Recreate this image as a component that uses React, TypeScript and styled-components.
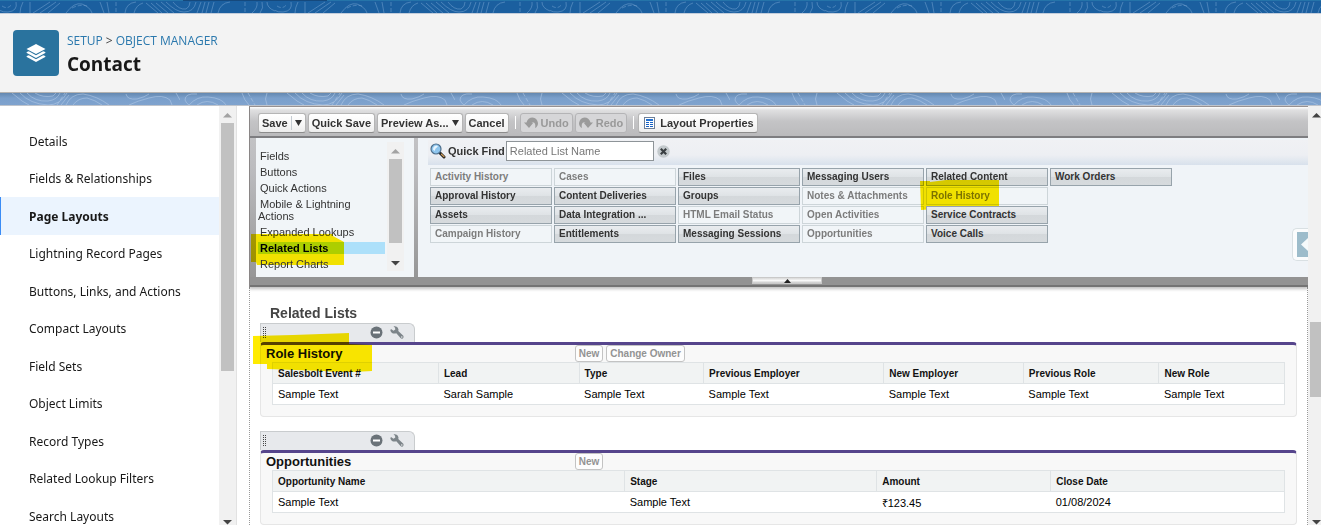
import React from "react";
import styled, { createGlobalStyle, css } from "styled-components";

const GlobalStyle = createGlobalStyle`
  *, *::before, *::after { box-sizing: border-box; }
  html, body { margin: 0; padding: 0; }
  body { background: #fff; overflow: hidden; color: #222; font-family: "Liberation Sans", Arial, sans-serif; }
  button, input { font: inherit; margin: 0; }
`;

/* ---------- page frame ---------- */

const Page = styled.div`
  display: flex;
  flex-direction: column;
  height: 100vh;
`;

const Band = styled.div<{ $light?: boolean }>`
  flex: none;
  height: ${(p) => (p.$light ? 13 : 14)}px;
  border-bottom: 1px solid ${(p) => (p.$light ? "#bfc4cc" : "#c3cddb")};
  background: ${(p) =>
    p.$light ? "linear-gradient(#6488b0, #7a9fcb 5px, #7fa3ce)" : "#1b5f9f"};
  svg { display: block; width: 100%; height: 100%; }
`;

const BrandHeader = styled.header`
  flex: none;
  display: flex;
  align-items: center;
  gap: 8px;
  height: 79px;
  padding: 0 13px;
  background: #f3f3f3;
  border-bottom: 1px solid #b4b2b0;
`;

const BrandIcon = styled.div`
  display: grid;
  place-items: center;
  width: 46px;
  height: 46px;
  border-radius: 4px;
  background: #2a739e;
`;

const BrandText = styled.div`
  padding-top: 2px;
  font-family: "Open Sans", "Noto Sans", sans-serif;
`;

const uiFont = css`font-family: "Noto Sans", "Open Sans", sans-serif;`;

const Crumbs = styled.nav`
  display: flex;
  gap: 3px;
  font-size: 12px;
  line-height: 20px;
  color: #444;
  a { color: #2a78ad; text-decoration: none; }
`;

const Title = styled.h1`
  margin: 0;
  font-size: 19px;
  line-height: 26px;
  font-weight: 700;
  color: #181818;
`;

const Body = styled.div`
  flex: 1;
  min-height: 0;
  display: flex;
  overflow: hidden;
`;

/* ---------- sidebar ---------- */

const Sidebar = styled.aside`
  flex: none;
  display: flex;
  width: 237px;
  border-right: 1px solid #e2e2e2;
`;

const SideList = styled.ul`
  flex: 1;
  margin: 0;
  padding: 16px 0 0;
  list-style: none;
  overflow: hidden;
`;

const SideItem = styled.li<{ $active?: boolean }>`
  ${uiFont}
  height: 37px;
  &:nth-child(odd) { height: 38px; }
  background: ${(p) => (p.$active ? "#ebf4fe" : "transparent")};
  box-shadow: ${(p) => (p.$active ? "inset 1px 0 #3b8cf5" : "none")};
  a {
    display: flex;
    align-items: center;
    height: 100%;
    padding-left: 29px;
    font-size: 12px;
    font-weight: ${(p) => (p.$active ? 700 : 400)};
    color: #181818;
    text-decoration: none;
  }
`;

/* ---------- scrollbars ---------- */

const Track = styled.div<{ $width: number }>`
  flex: none;
  display: flex;
  flex-direction: column;
  justify-content: space-between;
  width: ${(p) => p.$width}px;
  overflow: hidden;
  background: #f1f1f1;
  svg { flex: none; display: block; }
`;

const Thumb = styled.div<{ $offset: number; $size: number }>`
  flex: none;
  width: 13px;
  height: ${(p) => p.$size}px;
  margin: ${(p) => p.$offset}px 2px auto;
  background: #c1c1c1;
`;

function Scrollbar(props: { width: number; offset: number; size: number; up: string; foot: number }) {
  return (
    <Track $width={props.width} aria-hidden="true">
      <svg width="17" height="17"><path d="M4 11.5L8.5 7l4.500 4.500z" fill={props.up} /></svg>
      <Thumb $offset={props.offset} $size={props.size} />
      <svg width="17" height={props.foot}><path d="M4 7l4.500 4.500L13 7z" fill="#444" /></svg>
    </Track>
  );
}

/* ---------- layout editor ---------- */

const Editor = styled.main`
  flex: 1;
  min-width: 0;
  margin-left: 12px;
  display: flex;
  flex-direction: column;
  overflow: hidden;
`;

const Palette = styled.section`
  position: relative;
  flex: none;
  border-left: 1px solid #8a8686;
  border-top: 1px solid #979191;
  background: linear-gradient(#e9e9ea, #c6c6c8 12px, #bcbcbf 60px, #939393);
  box-shadow: 0 2px 3px rgba(0, 0, 0, 0.25);
`;

const Toolbar = styled.div`
  display: flex;
  align-items: center;
  gap: 2px;
  height: 31px;
  padding: 2px 8px 0 8px;
  background: linear-gradient(#fff, #e0e0e1 3px, #c4c4c6 14px, #bababc);
  border-bottom: 2px solid #7d7d80;
`;

const Tool = styled.button`
  display: flex;
  align-items: center;
  gap: 3px;
  height: 20px;
  padding: 0 3px;
  border: 1px solid #b5b5b5;
  border-bottom-color: #8c8c8c;
  border-radius: 3px;
  background: linear-gradient(#fff, #f7f7f7 60%, #ececec);
  font-size: 11px;
  line-height: 14px;
  font-weight: 700;
  color: #333;
  white-space: nowrap;
  &:disabled { color: #999; background: #d6d6d8; border-color: #b4b4b6; }
`;

const SplitLine = styled.span`
  width: 1px;
  height: 14px;
  background: #c5ccd2;
`;

const Divider = styled.span`
  width: 1px;
  height: 13px;
  margin: 0 2px 0 4px;
  background: #fff;
`;

const PaletteBody = styled.div`
  display: flex;
  height: 139px;
  margin-left: 6px;
`;

const Categories = styled.div`
  flex: none;
  display: flex;
  width: 158px;
  padding: 4px 10px 6px 2px;
  background: #f1f5f8;
`;

const CategoryList = styled.ul`
  flex: 1;
  margin: 8px 2px 0 0;
  padding: 0;
  list-style: none;
  font-size: 11px;
  line-height: 12px;
`;

const Category = styled.li<{ $active?: boolean }>`
  position: relative;
  margin-bottom: 4px;
  background: ${(p) => (p.$active ? "#ade0fa" : "transparent")};
  font-weight: ${(p) => (p.$active ? 700 : 400)};
  a { padding-left: 2px; color: ${(p) => (p.$active ? "#000" : "#333")}; text-decoration: none; }
`;

const Available = styled.div`
  flex: 1;
  min-width: 0;
  margin-left: 4px;
  padding: 2px 0 0 10px;
  background: #f0f4f8;
`;

const QuickFind = styled.form`
  display: flex;
  align-items: center;
  height: 25px;
  padding: 0 2px 3px;
  background: linear-gradient(#f0f1f4, #edeff3 60%, #d8e1ec);
  label {
    display: flex;
    align-items: center;
    gap: 2px;
    padding-bottom: 1px;
    font-size: 11px;
    font-weight: 700;
    color: #333;
  }
`;

const FindBox = styled.input`
  width: 148px;
  height: 20px;
  margin: 0 3px 0 1px;
  padding: 0 3px;
  border: 1px solid #8e9498;
  background: #fff;
  font-size: 11px;
  &::placeholder { color: #777; opacity: 1; }
`;

const ClearButton = styled.button`
  display: grid;
  width: 13px;
  height: 13px;
  padding: 0;
  border: 0;
  background: none;
`;

const ItemGrid = styled.div`
  display: grid;
  grid-auto-flow: column;
  grid-template-rows: repeat(4, 18px);
  grid-auto-columns: 122px;
  gap: 1px 2px;
  padding: 3px 2px;
`;

const Item = styled.div<{ $used?: boolean }>`
  position: relative;
  padding: 1px 4px;
  border: 1px solid ${(p) => (p.$used ? "#cdd5d9" : "#97a3ab")};
  background: ${(p) =>
    p.$used ? "#f1f5f8" : "linear-gradient(#e9ecef, #dfe3e6 48%, #d4d8db 52%, #d6dadd)"};
  font-size: 10px;
  line-height: 13px;
  font-weight: 700;
  color: ${(p) => (p.$used ? "#7c7c7c" : "#333")};
  white-space: nowrap;
`;

const PaletteFoot = styled.div`
  display: flex;
  justify-content: center;
  height: 10px;
  background: #939393;
  border-bottom: 2px solid #747474;
`;

const Collapse = styled.button`
  display: grid;
  place-items: center;
  width: 70px;
  height: 7px;
  margin-left: 16px;
  padding: 0;
  border: 1px solid #c9c9c9;
  background: linear-gradient(#d8d8d8, #f8f8f8 50%, #c8c8c8);
`;

const HelpTab = styled.button`
  position: absolute;
  right: 0;
  top: 121px;
  width: 16px;
  height: 33px;
  padding: 3px 0 4px 4px;
  border: 1px solid #d9e0e3;
  border-right: 0;
  border-radius: 5px 0 0 5px;
  background: #fbfcfd;
  svg { display: block; }
`;

const Canvas = styled.section`
  flex: 1;
  min-height: 0;
  overflow: hidden;
  padding: 17px 10px 0;
  border: dotted #999;
  border-width: 0 1px;
`;

const CanvasTitle = styled.h2`
  margin: 0 0 1px 10px;
  font-size: 14px;
  line-height: 18px;
  font-weight: 700;
  color: #444;
`;

const RelatedBlock = styled.article`
  margin-bottom: 14px;
`;

const Handle = styled.div`
  display: flex;
  align-items: center;
  width: 155px;
  height: 19px;
  padding: 0 0 1px 2px;
  border: 1px solid #c9ccce;
  border-bottom: 0;
  border-radius: 0 6px 0 0;
  background: #e7e9ec;
  button { display: grid; padding: 0; border: 0; background: none; }
`;

const HandleActions = styled.div`
  display: flex;
  gap: 7px;
  margin: 0 10px 0 auto;
`;

const Card = styled.div`
  position: relative;
  padding: 0 11px 11px;
  border: 1px solid #e6e6e6;
  border-top: 3px solid #56458c;
  border-radius: 4px;
  background: #f8f8f8;
`;

const CardHead = styled.div`
  display: flex;
  align-items: center;
  height: 17px;
  margin-left: -6px;
  gap: 3px;
  h3 { flex: 0 0 30%; margin: 0; font-size: 13px; line-height: 16px; color: #111; }
`;

const MiniButton = styled.button`
  height: 17px;
  padding: 0 3px;
  border: 1px solid #c3c3c3;
  border-radius: 3px;
  background: #fdfdfd;
  font-size: 10px;
  line-height: 13px;
  font-weight: 700;
  color: #939393;
`;

const Table = styled.table`
  width: 100%;
  table-layout: fixed;
  border-collapse: collapse;
  border: 1px solid #dfe3e5;
  background: #fff;
  text-align: left;
  color: #000;
  tr { height: 21px; }
  td { padding: 0 5px; font-size: 11px; }
`;

const Th = styled.th<{ $share: number }>`
  width: ${(p) => p.$share}%;
  padding: 0 5px;
  border: 1px solid #dfe3e5;
  background: #f1f3f3;
  font-size: 10px;
  color: #111;
`;

const Marker = styled.svg<{ $x: number; $y: number }>`
  position: absolute;
  left: ${(p) => p.$x}px;
  top: ${(p) => p.$y}px;
  mix-blend-mode: multiply;
  pointer-events: none;
`;

/* ---------- drawings ---------- */

function DarkContours() {
  return (
    <svg aria-hidden="true">
      <defs>
        <pattern id="dark" width="275" height="14" patternUnits="userSpaceOnUse">
          <g fill="none" stroke="#6f9fce" strokeOpacity=".55" strokeWidth="1">
            <path d="M-8 2Q-2 13 8 12Q18 11 16 2M23 2Q20 8 20 13M30 2V13M33 13L50 2M40 13L56 2M48 13L60 3M66 13Q74 2 82 4Q90 7 92 13M100 2L104 13M107 2L109 13M125 13Q126 3 136 2M134 13Q136 5 143 3M146 3L158 13M151 3L162 13M156 3L168 13M161 2L174 13M166 2Q176 12 184 12Q194 12 196 2M173 2Q179 10 186 9Q190 7 190 2M201 2L197 13M205 2L202 13M209 2L206 13M214 2L211 13M218 13Q220 3 230 2M252 13Q258 8 257 2M260 13Q264 8 262 2M267 2Q267 8 275 11" />
            <path strokeDasharray="4 2" d="M2 6Q8 10 12 4M72 8Q80 4 87 6M116 2V13M245 2V13M277 6Q283 10 287 4" />
          </g>
        </pattern>
      </defs>
      <rect width="100%" height="100%" fill="url(#dark)" />
      <rect width="100%" height="1" fill="#2574a9" />
      <rect x="183" width="144" height="1" fill="#16497c" />
    </svg>
  );
}

function LightContours() {
  return (
    <svg aria-hidden="true">
      <defs>
        <pattern id="light" x="180" width="275" height="13" patternUnits="userSpaceOnUse">
          <g fill="none" stroke="#b3cae6" strokeOpacity=".55" strokeWidth="1">
            <path d="M17 1Q5 0 5 7Q6 10 9 12M9 12Q17 3 28 4Q42 5 46 12M17 12Q27 5 38 12M62 0Q64 7 69 12M87 0Q84 6 87 12M115 0Q125 11 143 12Q155 12 162 0M122 0Q130 9 143 8Q152 7 155 0M130 0Q138 5 148 3L151 0M156 12L164 2M161 12Q166 1 178 1Q192 3 204 12M168 12Q173 5 182 5Q190 7 197 12M221 1Q222 7 232 6Q240 4 244 1M224 12Q232 8 244 5Q258 1 265 7L267 12M271 0Q274 8 281 12M107 0L117 8L124 12" />
            <path strokeDasharray="4 2" d="M68 0L75 12M152 12L160 0" />
          </g>
        </pattern>
      </defs>
      <rect width="100%" height="100%" fill="url(#light)" />
    </svg>
  );
}

const LayersIcon = () => (
  <svg width="20" height="20" viewBox="0 0 20 20" fill="#fff" aria-hidden="true">
    <path d="M10 1L19.500 6L10 11L.5 6z" />
    <path d="M.8 9L2.800 8.200L10 12.200L17.200 8.200L19.200 9Q19.700 9.500 19.200 10L10 15L.8 10Q.3 9.500 .8 9z" />
    <path d="M.8 13L2.800 12.200L10 16.200L17.200 12.200L19.200 13Q19.700 13.500 19.200 14L10 19L.8 14Q.3 13.500 .8 13z" />
  </svg>
);

const DownArrow = () => (
  <svg width="7" height="6" aria-hidden="true"><path d="M0 0H7L3.500 6z" fill="#333" /></svg>
);

const CurveArrow = ({ flip }: { flip?: boolean }) => (
  <svg width="14" height="12" viewBox="0 0 14 12" fill="#9b9b9b" aria-hidden="true">
    <path
      transform={flip ? "translate(14 0) scale(-1 1)" : undefined}
      d="M0 5.500H2.500Q4 .5 8.500 .5Q13 .8 14 6Q14 9.500 11 11Q12 7 10 5.500Q8.500 4.300 7.500 5.500H9.500L5 11z"
    />
  </svg>
);

const PropertiesIcon = () => (
  <svg width="15" height="12" viewBox="-2 0 15 12" aria-hidden="true">
    <rect x=".5" y=".5" width="10" height="11" fill="#fff" stroke="#6d7f99" />
    <rect x="2" y="2" width="7" height="2" fill="#1f6fd0" />
    <path d="M2 5.500H5M6 5.500H9M2 7.500H5M6 7.500H9M2 9.500H5M6 9.500H9" stroke="#1761c4" />
  </svg>
);

const Magnifier = () => (
  <svg width="16" height="16" viewBox="0 0 16 16" aria-hidden="true">
    <path d="M10 10L14 14" stroke="#222" strokeWidth="3" strokeLinecap="round" />
    <path d="M11.500 11.200L14 13.600" stroke="#d8a45c" strokeWidth="1.200" strokeLinecap="round" />
    <circle cx="6" cy="6" r="5" fill="#8fc6ee" stroke="#4f6f8c" strokeWidth="1.200" />
    <path d="M3 6.500Q3 3 6.500 2.500L8 3.500Q5 5 4.500 8z" fill="#e8f5fe" />
  </svg>
);

const ClearIcon = () => (
  <svg width="13" height="13" aria-hidden="true">
    <circle cx="6.500" cy="6.500" r="6.200" fill="#c3c9cc" />
    <path d="M3.800 3.800L9.200 9.200M9.200 3.800L3.800 9.200" stroke="#3a3f42" strokeWidth="2.200" />
  </svg>
);

const Grip = () => (
  <svg width="4" height="11" aria-hidden="true">
    <path d="M.5 0V11M2.500 0V11" stroke="#444" strokeDasharray="1 1" />
  </svg>
);

const MinusIcon = () => (
  <svg width="13" height="13" aria-hidden="true">
    <circle cx="6.500" cy="6.500" r="6" fill="#6a7278" />
    <path d="M3 6.500H10" stroke="#fff" strokeWidth="2" />
  </svg>
);

const WrenchIcon = () => (
  <svg width="14" height="13" viewBox="0 0 14 13" fill="#7d858a" aria-hidden="true">
    <path d="M3.500 .3Q7.500 -.3 8.500 3.500L8.300 5L13.300 9.800Q14 11.500 12.800 12.500Q11.500 13 10.500 12L6.300 7.300Q1.500 8.500 .3 4.200L1 3L3.500 4.800L5.300 3.500L5 1.800z" />
    <circle cx="11.800" cy="11" r=".8" fill="#e7e9ec" />
  </svg>
);

/* ---------- data ---------- */

const sideLinks = [
  "Details", "Fields & Relationships", "Page Layouts", "Lightning Record Pages",
  "Buttons, Links, and Actions", "Compact Layouts", "Field Sets", "Object Limits",
  "Record Types", "Related Lookup Filters", "Search Layouts",
];

const categories = [
  "Fields", "Buttons", "Quick Actions", "Mobile & Lightning Actions",
  "Expanded Lookups", "Related Lists", "Report Charts",
];

const items: [string, boolean][] = [
  ["Activity History", true], ["Approval History", false], ["Assets", false], ["Campaign History", true],
  ["Cases", true], ["Content Deliveries", false], ["Data Integration ...", false], ["Entitlements", false],
  ["Files", false], ["Groups", false], ["HTML Email Status", true], ["Messaging Sessions", false],
  ["Messaging Users", false], ["Notes & Attachments", true], ["Open Activities", true], ["Opportunities", true],
  ["Related Content", false], ["Role History", true], ["Service Contracts", false], ["Voice Calls", false],
  ["Work Orders", false],
];

interface Related {
  title: string;
  buttons: string[];
  columns: [string, number, string][];
  marked?: boolean;
}

const related: Related[] = [
  {
    title: "Role History",
    buttons: ["New", "Change Owner"],
    marked: true,
    columns: [
      ["Salesbolt Event #", 16.4, "Sample Text"],
      ["Lead", 13.9, "Sarah Sample"],
      ["Type", 12.3, "Sample Text"],
      ["Previous Employer", 17.8, "Sample Text"],
      ["New Employer", 13.8, "Sample Text"],
      ["Previous Role", 13.4, "Sample Text"],
      ["New Role", 12.4, "Sample Text"],
    ],
  },
  {
    title: "Opportunities",
    buttons: ["New"],
    columns: [
      ["Opportunity Name", 34.8, "Sample Text"],
      ["Stage", 24.9, "Sample Text"],
      ["Amount", 17.2, "₹123.45"],
      ["Close Date", 23.1, "01/08/2024"],
    ],
  },
];

function RelatedList({ title, buttons, columns, marked }: Related) {
  return (
    <RelatedBlock>
      <Handle>
        <Grip />
        <HandleActions>
          <button type="button" aria-label={`Remove ${title}`}><MinusIcon /></button>
          <button type="button" aria-label={`Edit ${title}`}><WrenchIcon /></button>
        </HandleActions>
      </Handle>
      <Card>
        <CardHead>
          <h3>{title}</h3>
          {buttons.map((b) => <MiniButton type="button" key={b}>{b}</MiniButton>)}
        </CardHead>
        <Table>
          <thead>
            <tr>{columns.map(([name, share]) => <Th key={name} $share={share}>{name}</Th>)}</tr>
          </thead>
          <tbody>
            <tr>{columns.map(([name, , value]) => <td key={name}>{value}</td>)}</tr>
          </tbody>
        </Table>
        {marked && (
          <Marker $x={-8} $y={-12} width="120" height="40" aria-hidden="true">
            <path d="M0 3L40 2L96 0V11L119 12V38Q90 40 70 38L14 36V31H0z" fill="#ffeb00" />
          </Marker>
        )}
      </Card>
    </RelatedBlock>
  );
}

export default function App() {
  return (
    <Page>
      <GlobalStyle />
      <Band><DarkContours /></Band>
      <BrandHeader>
        <BrandIcon><LayersIcon /></BrandIcon>
        <BrandText>
          <Crumbs aria-label="Breadcrumb">
            <a href="#setup">SETUP</a><span>&gt;</span><a href="#objects">OBJECT MANAGER</a>
          </Crumbs>
          <Title>Contact</Title>
        </BrandText>
      </BrandHeader>
      <Band $light><LightContours /></Band>
      <Body>
        <Sidebar>
          <SideList>
            {sideLinks.map((name) => (
              <SideItem key={name} $active={name === "Page Layouts"}><a href="#section">{name}</a></SideItem>
            ))}
          </SideList>
          <Scrollbar width={17} offset={0} size={248} up="#a3a3a3" foot={12} />
        </Sidebar>
        <Editor>
          <Palette>
            <Toolbar>
              <Tool type="button">Save<SplitLine /><DownArrow /></Tool>
              <Tool type="button">Quick Save</Tool>
              <Tool type="button">Preview As...<DownArrow /></Tool>
              <Tool type="button">Cancel</Tool>
              <Divider />
              <Tool type="button" disabled><CurveArrow />Undo</Tool>
              <Tool type="button" disabled><CurveArrow flip />Redo</Tool>
              <Divider />
              <Tool type="button"><PropertiesIcon />Layout Properties</Tool>
            </Toolbar>
            <PaletteBody>
              <Categories>
                <CategoryList>
                  {categories.map((name) => (
                    <Category key={name} $active={name === "Related Lists"}>
                      <a href="#category">{name}</a>
                      {name === "Related Lists" && (
                        <Marker $x={-7} $y={-8} width="94" height="32" aria-hidden="true">
                          <path d="M0 0H82V2L93 8V31H6L5 28H0z" fill="#ffeb00" />
                        </Marker>
                      )}
                    </Category>
                  ))}
                </CategoryList>
                <Scrollbar width={17} offset={0} size={84} up="#a3a3a3" foot={17} />
              </Categories>
              <Available>
                <QuickFind>
                  <label htmlFor="find"><Magnifier />Quick Find</label>
                  <FindBox id="find" type="text" placeholder="Related List Name" />
                  <ClearButton type="button" aria-label="Clear"><ClearIcon /></ClearButton>
                </QuickFind>
                <ItemGrid>
                  {items.map(([name, used]) => (
                    <Item key={name} $used={used}>
                      {name}
                      {name === "Role History" && (
                        <Marker $x={-7} $y={-8} width="80" height="31" aria-hidden="true">
                          <path d="M0 1H10V2L26 0H79V28L30 28L1 30z" fill="#ffeb00" />
                        </Marker>
                      )}
                    </Item>
                  ))}
                </ItemGrid>
              </Available>
            </PaletteBody>
            <PaletteFoot>
              <Collapse type="button" aria-label="Collapse palette">
                <svg width="7" height="4"><path d="M0 4L3.500 0L7 4z" fill="#222" /></svg>
              </Collapse>
            </PaletteFoot>
            <HelpTab type="button" aria-label="Open help">
              <svg width="11" height="25" aria-hidden="true">
                <rect width="11" height="25" fill="#9dbccb" />
                <path d="M4 12.500L11 6V19z" fill="#f6fafb" />
              </svg>
            </HelpTab>
          </Palette>
          <Canvas>
            <CanvasTitle>Related Lists</CanvasTitle>
            {related.map((r) => <RelatedList key={r.title} {...r} />)}
          </Canvas>
        </Editor>
        <Scrollbar width={13} offset={199} size={75} up="#444" foot={12} />
      </Body>
    </Page>
  );
}
